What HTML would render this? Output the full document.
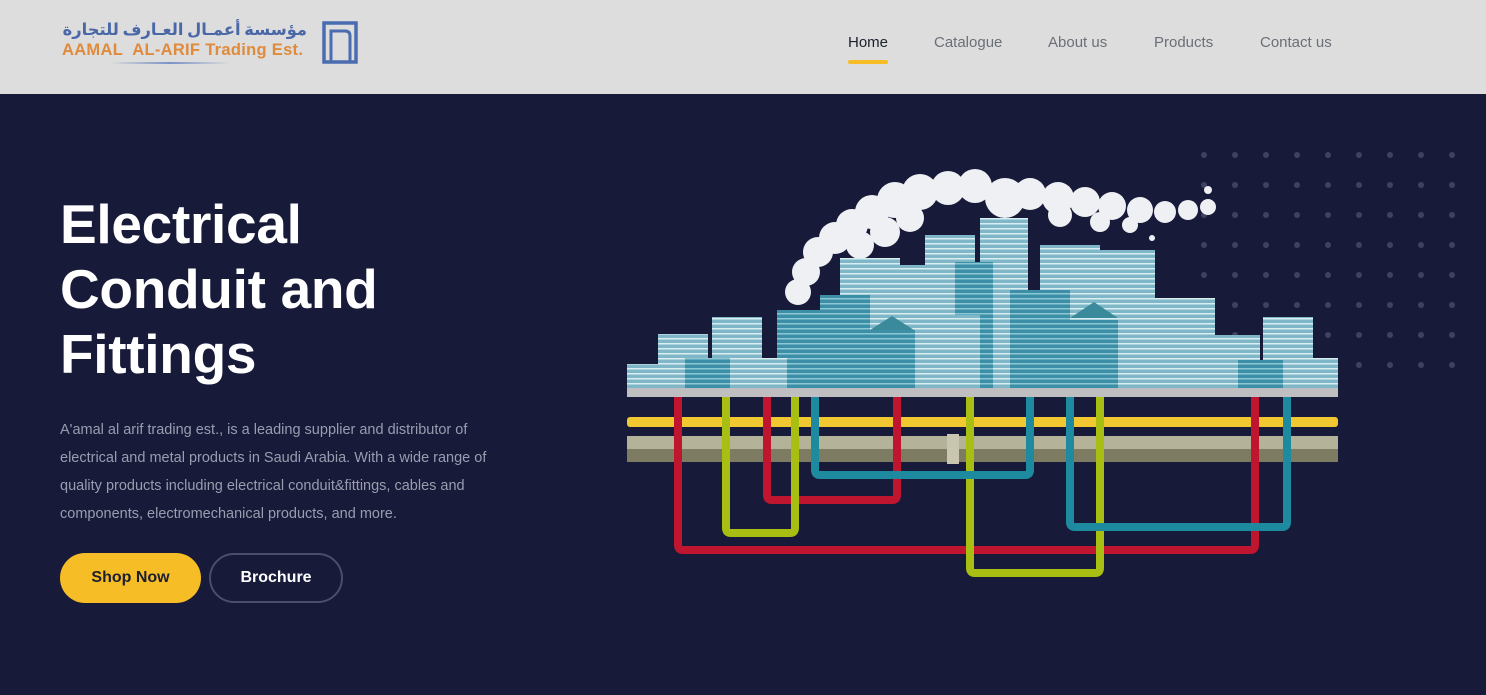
<!DOCTYPE html>
<html><head><meta charset="utf-8"><style>
*{margin:0;padding:0;box-sizing:border-box}
body{width:1486px;height:695px;overflow:hidden;background:#171a38;font-family:"Liberation Sans",Arial,sans-serif}
header{height:94px;background:#dcdddc;position:relative}
.nav{position:absolute;top:34px;font-size:15px;color:#6b6f78}
.nav span{position:absolute;white-space:nowrap}
.hero{position:absolute;left:60px;top:192px;color:#fff}
h1{font-size:55px;line-height:65px;font-weight:700;letter-spacing:-0.3px}
p{position:absolute;left:60px;top:416px;width:450px;font-size:14.5px;line-height:28px;color:#9a9db0}
.b{position:absolute;top:553px;height:50px;border-radius:25px;font-weight:700;font-size:16px;display:flex;align-items:center;justify-content:center}
</style></head><body>
<header>
<div style="position:absolute;left:62px;top:15px;font-family:'Noto Sans CJK SC','DejaVu Sans',sans-serif;font-size:16.3px;font-weight:700;color:#4a68a8;width:245px;text-align:right;line-height:26px;white-space:nowrap" dir="rtl">مؤسسة أعمـال العـارف للتجارة</div>
<div style="position:absolute;left:62px;top:41px;font-size:16.5px;font-weight:700;color:#e08a3c;letter-spacing:0.3px;white-space:nowrap">AAMAL&nbsp; AL-ARIF Trading Est.</div>
<div style="position:absolute;left:110px;top:62px;width:120px;height:2px;background:linear-gradient(90deg,transparent,#7b92c4,transparent)"></div>
<svg style="position:absolute;left:322px;top:21px" width="36" height="43"><rect x="2" y="2" width="32" height="39" fill="none" stroke="#4a6cb0" stroke-width="3.5"/><path d="M9 41V10h14q5 0 5 5v26" fill="none" stroke="#4a6cb0" stroke-width="3"/></svg>
<div class="nav">
<span style="left:848px;color:#1c1f2e">Home</span>
<span style="left:934px">Catalogue</span>
<span style="left:1048px">About us</span>
<span style="left:1154px">Products</span>
<span style="left:1260px">Contact us</span>
</div>
<div style="position:absolute;left:848px;top:60px;width:40px;height:4px;border-radius:2px;background:#f7bd26"></div>
</header>
<div class="hero"><h1>Electrical<br>Conduit and<br>Fittings</h1></div>
<p>A'amal al arif trading est., is a leading supplier and distributor of electrical and metal products in Saudi Arabia. With a wide range of quality products including electrical conduit&amp;fittings, cables and components, electromechanical products, and more.</p>
<div class="b" style="left:60px;width:141px;background:#f7bd26;color:#1c1f2e">Shop Now</div>
<div class="b" style="left:209px;width:134px;border:2px solid #4a4e6a;color:#fff">Brochure</div>
<svg style="position:absolute;left:0;top:0" width="1486" height="695">
<defs>
<pattern id="d" x="1199" y="150" width="31" height="30" patternUnits="userSpaceOnUse"><circle cx="5" cy="5" r="3" fill="#3e4262"/></pattern>
<pattern id="w" width="6" height="5" patternUnits="userSpaceOnUse"><rect width="6" height="5" fill="#7fb6c8"/><rect y="3" width="6" height="1.5" fill="#d9eef0"/></pattern>
<pattern id="w2" width="6" height="5" patternUnits="userSpaceOnUse"><rect width="6" height="5" fill="#3c8fa6"/><rect y="3" width="6" height="1.5" fill="#8cc7d4"/></pattern>
</defs>
<rect x="1199" y="150" width="270" height="225" fill="url(#d)"/>
<g fill="#eef0f4">
<circle cx="798" cy="292" r="13"/><circle cx="806" cy="272" r="14"/><circle cx="818" cy="252" r="15"/><circle cx="835" cy="238" r="16"/><circle cx="852" cy="225" r="16"/><circle cx="872" cy="212" r="17"/><circle cx="895" cy="200" r="18"/><circle cx="920" cy="192" r="18"/><circle cx="948" cy="188" r="17"/><circle cx="975" cy="186" r="17"/><circle cx="1005" cy="198" r="20"/><circle cx="1030" cy="194" r="16"/><circle cx="1058" cy="198" r="16"/><circle cx="1085" cy="202" r="15"/><circle cx="1112" cy="206" r="14"/><circle cx="1140" cy="210" r="13"/><circle cx="1165" cy="212" r="11"/><circle cx="1188" cy="210" r="10"/><circle cx="1208" cy="207" r="8"/><circle cx="1208" cy="190" r="4"/><circle cx="1152" cy="238" r="3"/><circle cx="860" cy="245" r="14"/><circle cx="885" cy="232" r="15"/><circle cx="910" cy="218" r="14"/><circle cx="1060" cy="215" r="12"/><circle cx="1100" cy="222" r="10"/><circle cx="1130" cy="225" r="8"/>
</g>
<g>
<rect x="925" y="235" width="50" height="153" fill="url(#w)"/>
<rect x="980" y="218" width="48" height="170" fill="url(#w)"/>
<rect x="840" y="258" width="60" height="130" fill="url(#w)"/>
<rect x="1040" y="245" width="60" height="143" fill="url(#w)"/>
<rect x="1100" y="250" width="55" height="138" fill="url(#w)"/>
<rect x="900" y="265" width="50" height="123" fill="url(#w)"/>
<rect x="955" y="262" width="38" height="126" fill="url(#w2)"/>
<rect x="820" y="295" width="50" height="93" fill="url(#w2)"/>
<rect x="777" y="310" width="45" height="78" fill="url(#w2)"/>
<rect x="1010" y="290" width="60" height="98" fill="url(#w2)"/>
<rect x="870" y="330" width="45" height="58" fill="url(#w2)"/>
<rect x="1070" y="320" width="48" height="68" fill="url(#w2)"/>
<rect x="945" y="315" width="35" height="73" fill="url(#w)"/>
<rect x="1145" y="298" width="70" height="90" fill="url(#w)"/>
<rect x="712" y="317" width="50" height="71" fill="url(#w)"/>
<rect x="658" y="334" width="50" height="54" fill="url(#w)"/>
<rect x="1210" y="335" width="50" height="53" fill="url(#w)"/>
<rect x="1263" y="317" width="50" height="71" fill="url(#w)"/>
<rect x="627" y="364" width="33" height="24" fill="url(#w)"/>
<rect x="685" y="358" width="45" height="30" fill="url(#w2)"/>
<rect x="742" y="358" width="45" height="30" fill="url(#w)"/>
<rect x="1238" y="360" width="45" height="28" fill="url(#w2)"/>
<rect x="1290" y="358" width="48" height="30" fill="url(#w)"/>
<path d="M870 330l22-14 22 14z M1070 318l24-16 24 16z" fill="#3a8a9c"/>
</g>
<rect x="627" y="388" width="711" height="9" fill="#bfbfc2"/>
<rect x="627" y="417" width="711" height="10" rx="3" fill="#f1c832"/>
<rect x="627" y="436" width="711" height="26" fill="#b5b29a"/>
<rect x="627" y="449" width="711" height="13" fill="#7d7b62"/>
<rect x="947" y="434" width="12" height="30" fill="#c9c6b0"/>
<g fill="none" stroke-width="8" stroke-linejoin="round">
<path d="M678 397V545q0 5 5 5H1250q5 0 5-5V397" stroke="#c0152e"/>
<path d="M767 397V495q0 5 5 5H892q5 0 5-5V397" stroke="#c0152e"/>
<path d="M726 397V528q0 5 5 5H790q5 0 5-5V397" stroke="#a9be13"/>
<path d="M970 397V568q0 5 5 5H1095q5 0 5-5V397" stroke="#a9be13"/>
<path d="M815 397V470q0 5 5 5H1025q5 0 5-5V397" stroke="#1e8aa0"/>
<path d="M1070 397V522q0 5 5 5H1282q5 0 5-5V397" stroke="#1e8aa0"/>
</g>
</svg>
</body></html>
